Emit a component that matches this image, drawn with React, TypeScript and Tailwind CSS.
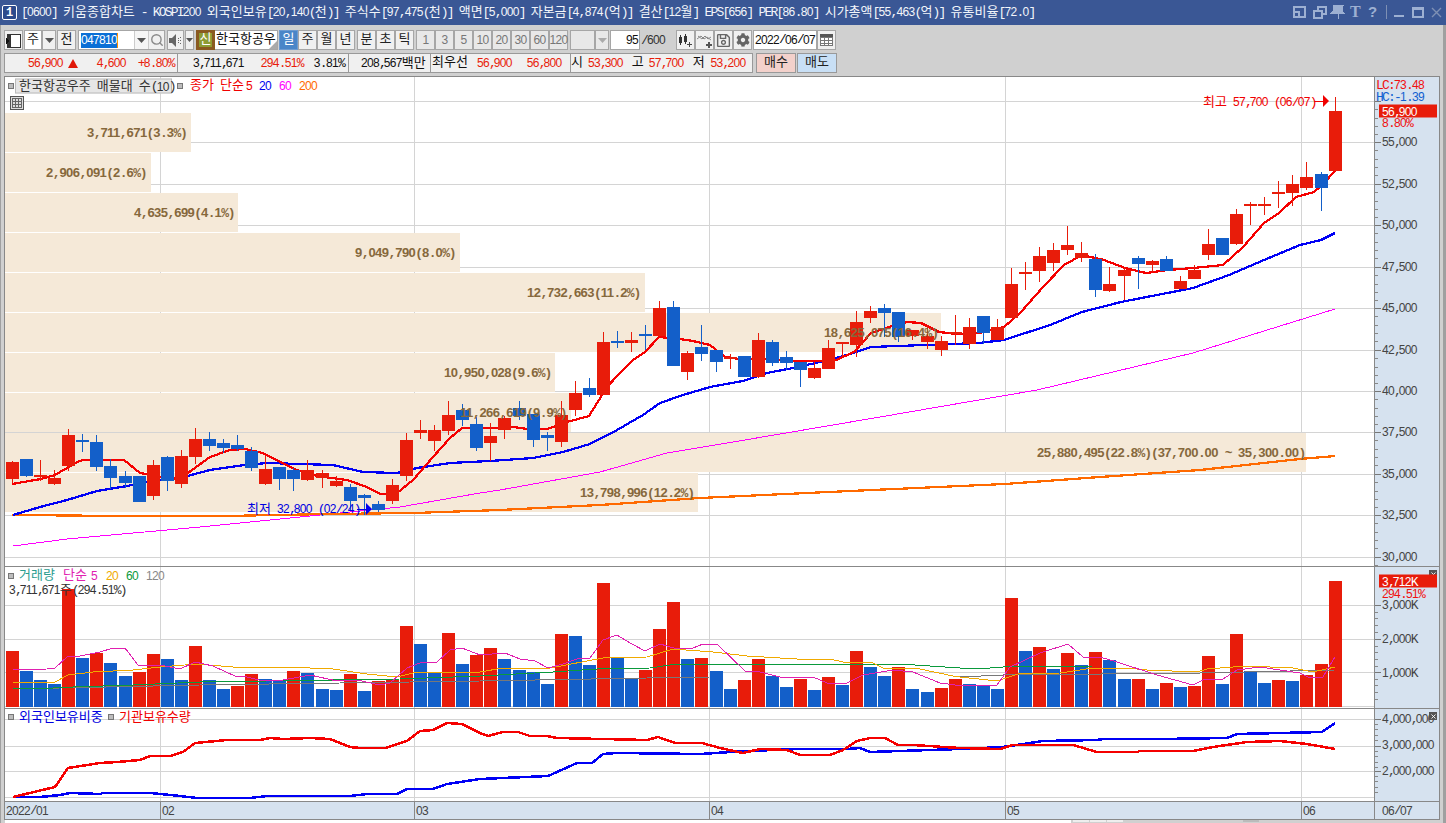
import { Search, X } from 'lucide-react'
import { FaCog, FaRegSave } from 'react-icons/fa'

// kind (1 red, 0 blue), body top, body bottom, wick top, wick bottom
const CANDLES: [number, number, number, number, number][] = [
  [1, 462, 479, 461, 483], [0, 459, 476, 459, 477], [1, 475, 476, 460, 481], [1, 478, 484, 470, 485], [1, 435, 466, 429, 471],
  [0, 440, 441, 434, 452], [0, 442, 467, 435, 471], [0, 466, 478, 459, 489], [0, 476, 483, 471, 488], [0, 476, 502, 476, 502],
  [1, 465, 496, 460, 500], [0, 457, 481, 456, 491], [1, 456, 484, 450, 488], [1, 439, 457, 428, 464], [0, 439, 446, 432, 451],
  [0, 443, 448, 439, 453], [0, 445, 449, 435, 451], [0, 451, 468, 447, 471], [1, 469, 484, 456, 485], [0, 467, 479, 467, 490],
  [0, 470, 479, 468, 491], [1, 470, 480, 460, 481], [1, 473, 478, 470, 488], [1, 481, 486, 476, 487], [0, 487, 501, 484, 510],
  [0, 495, 498, 494, 515], [0, 504, 510, 501, 512], [1, 485, 501, 479, 504], [1, 440, 476, 433, 481], [1, 430, 433, 420, 439],
  [1, 430, 441, 425, 451], [1, 415, 431, 401, 435], [0, 410, 420, 404, 426], [0, 424, 448, 417, 451], [1, 436, 443, 423, 461],
  [1, 418, 430, 416, 439], [0, 408, 416, 401, 420], [0, 414, 440, 414, 447], [0, 435, 438, 432, 451], [1, 415, 442, 401, 447],
  [1, 393, 410, 381, 416], [0, 388, 395, 378, 397], [1, 342, 395, 332, 395], [0, 341, 343, 331, 348], [1, 340, 343, 332, 352],
  [0, 334, 335, 325, 350], [1, 308, 336, 301, 336], [0, 307, 366, 301, 366], [1, 353, 372, 351, 380], [0, 347, 354, 325, 361],
  [0, 350, 362, 350, 372], [1, 357, 359, 354, 369], [0, 356, 377, 356, 377], [1, 340, 377, 333, 378], [0, 342, 363, 340, 366],
  [0, 357, 363, 351, 370], [0, 362, 370, 362, 387], [1, 368, 378, 362, 379], [1, 348, 369, 340, 369], [1, 342, 343, 342, 356],
  [1, 322, 345, 311, 357], [1, 311, 318, 306, 323], [0, 308, 313, 304, 337], [0, 312, 337, 312, 342], [1, 330, 336, 330, 340],
  [1, 336, 342, 325, 349], [1, 341, 350, 336, 356], [1, 332, 333, 315, 345], [1, 327, 344, 318, 349], [0, 316, 333, 316, 344],
  [1, 327, 340, 319, 340], [1, 284, 318, 268, 318], [1, 272, 274, 262, 290], [1, 256, 271, 247, 282], [1, 250, 263, 243, 271],
  [1, 245, 250, 226, 255], [1, 253, 258, 242, 262], [0, 259, 290, 254, 297], [1, 284, 291, 267, 292], [1, 270, 276, 267, 300],
  [0, 258, 264, 256, 289], [1, 261, 265, 260, 272], [0, 259, 271, 256, 271], [1, 281, 289, 276, 289], [1, 270, 279, 265, 279],
  [1, 244, 255, 229, 260], [0, 238, 255, 238, 255], [1, 214, 244, 209, 245], [1, 204, 206, 202, 225], [1, 204, 205, 197, 215],
  [1, 192, 193, 181, 208], [1, 184, 193, 175, 206], [1, 177, 188, 162, 190], [0, 174, 188, 172, 211], [1, 111, 171, 97, 171],
]

const VOLUMES: [number, number][] = [
  [1, 651], [0, 671], [0, 680], [0, 684], [1, 589], [0, 658], [1, 653], [0, 663], [0, 676], [1, 672],
  [1, 654], [0, 659], [0, 680], [1, 646], [0, 680], [0, 689], [1, 686], [1, 674], [0, 679], [0, 680],
  [1, 671], [0, 673], [0, 689], [0, 690], [1, 674], [0, 691], [1, 681], [1, 679], [1, 626], [0, 644],
  [0, 673], [1, 633], [0, 664], [1, 655], [1, 648], [0, 659], [0, 670], [0, 672], [0, 684], [1, 634],
  [0, 636], [0, 665], [1, 583], [0, 658], [0, 678], [1, 670], [1, 629], [1, 602], [0, 659], [1, 658],
  [0, 671], [0, 689], [1, 680], [1, 659], [0, 676], [0, 687], [1, 679], [0, 690], [1, 677], [0, 685],
  [1, 651], [0, 667], [0, 676], [1, 667], [0, 689], [0, 692], [1, 688], [1, 679], [0, 684], [0, 686],
  [0, 689], [1, 598], [0, 651], [1, 647], [0, 669], [1, 653], [0, 665], [1, 652], [0, 660], [0, 679],
  [1, 679], [0, 689], [1, 683], [0, 687], [1, 686], [1, 656], [0, 684], [1, 634], [0, 671], [0, 683],
  [1, 680], [0, 681], [1, 675], [1, 664], [1, 581],
]

// price panel moving averages, page coordinates
const MA5 = '12,484 41,479 55,475 67,468 77,462 83,460 110,460 124,460 140,473 157,476 173,479 188,473 210,457 230,450 245,449 263,453 280,462 297,470 317,476 347,480 367,487 380,494 397,493 413,480 433,457 450,438 462,428 490,428 513,427 528,429 547,429 567,422 589,416 607,387 618,375 633,360 645,352 659,337 680,339 693,341 710,345 725,357 740,359 767,359 793,361 813,361 836,360 854,352 871,333 889,327 907,322 921,323 939,332 957,334 979,333 1004,327 1021,312 1043,287 1064,265 1082,255 1104,260 1125,268 1146,273 1168,270 1193,268 1223,265 1243,247 1264,223 1279,213 1296,197 1314,192 1321,186 1335,171'
const MA20 = '13,515 40,507 67,500 97,491 127,486 147,482 180,478 210,470 245,465 267,463 333,465 363,472 397,473 417,468 450,463 490,461 533,458 563,452 590,444 617,430 643,415 660,403 683,395 710,387 743,381 767,373 793,368 820,362 847,355 871,347 925,345 979,343 1004,340 1050,325 1082,312 1121,302 1157,295 1193,288 1229,275 1264,260 1300,245 1321,240 1335,233'
const MA60 = '13,546 67,539 200,527 300,517 400,507 480,493 500,490 600,472 667,453 733,442 880,417 1037,390 1193,353 1335,309'
const MA200 = '12,515 124,516 224,516 330,514 414,513 500,510 600,505 700,498 850,491 1005,484 1100,477 1200,470 1300,459 1335,456'

// volume panel averages
const V5 = '13,670 47,669 55,668 68,656 80,656 100,652 113,648 125,648 138,665 160,665 180,669 195,662 213,666 237,677 243,676 263,681 283,680 310,675 337,681 357,680 380,685 390,683 407,668 420,663 437,662 450,650 462,648 480,655 505,653 520,659 535,661 548,668 563,664 577,659 590,658 603,640 617,635 630,643 645,651 660,644 677,649 693,648 703,644 717,644 745,671 760,672 780,677 813,677 827,683 847,683 863,675 893,670 913,672 940,683 963,686 997,685 1010,667 1040,653 1068,644 1083,657 1100,657 1117,662 1157,675 1193,685 1203,680 1223,679 1237,670 1260,667 1280,670 1300,673 1310,678 1323,677 1335,657'
const V20 = '13,682 55,682 68,675 93,672 133,670 160,667 197,664 233,667 287,667 333,669 367,674 397,677 417,672 480,672 503,668 550,668 603,658 647,657 673,649 713,652 747,656 797,659 830,659 843,662 873,663 883,668 920,669 953,676 960,677 997,681 1018,674 1060,673 1093,668 1127,668 1147,670 1197,672 1207,669 1247,666 1293,668 1313,672 1335,667'
const V60 = '13,688 33,689 73,687 133,685 200,682 267,681 400,679 480,676 553,672 597,669 650,668 670,665 780,664 900,664 960,668 990,668 1003,667 1093,666 1335,666'
const V120 = '13,689 200,685 480,681 647,678 710,677 960,677 1003,675 1200,673 1335,670'

// indicator panel
const INST = '13,797 55,787 68,768 100,763 117,762 140,760 150,756 170,756 183,752 195,743 227,740 260,740 270,738 283,739 310,738 330,739 350,747 360,748 385,748 407,741 420,731 433,730 447,723 462,724 480,733 488,736 503,732 518,732 530,736 547,736 557,738 647,740 658,737 675,743 702,743 720,748 743,753 760,749 787,750 800,755 830,755 843,750 857,741 870,738 885,738 898,745 913,745 960,748 1000,749 1013,745 1073,745 1097,752 1137,752 1140,751 1193,751 1213,747 1247,742 1280,741 1307,744 1335,749'
const FOREIGN = '13,797 40,797 60,795 70,793 100,794 103,793 150,793 180,796 197,798 250,798 267,796 350,796 367,794 397,794 407,789 433,789 447,784 480,779 548,776 577,763 592,763 603,754 617,753 700,754 747,751 800,749 847,749 860,748 870,752 900,751 960,749 1003,747 1043,741 1097,740 1103,739 1160,739 1227,738 1237,734 1322,732 1335,723'

const PROFILE = [
  { y: 113, w: 186, label: '3,711,671(3.3%)', tx: 87 },
  { y: 153, w: 146, label: '2,906,091(2.6%)', tx: 46 },
  { y: 193, w: 233, label: '4,635,699(4.1%)', tx: 134 },
  { y: 233, w: 455, label: '9,049,790(8.0%)', tx: 355 },
  { y: 273, w: 640, label: '12,732,663(11.2%)', tx: 527 },
  { y: 313, w: 936, label: '18,625,075(16.4%)', tx: 824 },
  { y: 353, w: 550, label: '10,950,028(9.6%)', tx: 444 },
  { y: 393, w: 566, label: '11,266,619(9.9%)', tx: 460 },
  { y: 433, w: 1301, label: '25,880,495(22.8%)(37,700.00 ~ 35,300.00)', tx: 1037 },
  { y: 473, w: 693, label: '13,798,996(12.2%)', tx: 580 },
]

const MONTH_LINES = [160, 414, 709, 1005, 1301]
const PRICE_LINES = [101, 142, 184, 225, 267, 308, 350, 391, 432, 474, 515, 557]
const VOLUME_LINES = [605, 639, 672, 706]
const INDICATOR_LINES = [719, 746, 771, 797]

const PRICE_LABELS = ['55,000', '52,500', '50,000', '47,500', '45,000', '42,500', '40,000', '37,500', '35,000', '32,500', '30,000']

const RED = '#e81c0a'
const BLUE = '#135fc9'

const barX = (i: number) => Math.round(6 + 14.07 * i)

type TxtProps = { s: string; digit?: string; latin?: string; comma?: string }

// the screenshot's font is half-width: digits and latin advance 6px, hangul 12px
function Txt({
  s,
  digit = "font-['Liberation_Sans',sans-serif] text-[12px] tracking-[-0.67px]",
  latin = 'tracking-[-1.8px]',
  comma = 'tracking-[-3px]',
}: TxtProps) {
  return (
    <>
      {s
        .split(/([\u3131-\uD7A3]+|,|\d+)/)
        .filter(Boolean)
        .map((run, i) => {
          if (/[\u3131-\uD7A3]/.test(run)) return <span key={i}>{run}</span>
          if (run === ',') return <span key={i} className={comma}>{run}</span>
          return (
            <span key={i} className={/\d/.test(run) ? digit : latin}>
              {run}
            </span>
          )
        })}
    </>
  )
}

// label on the chart canvas, x/y in page pixels
function At({ x, y, className, children }: { x: number; y: number; className?: string; children: React.ReactNode }) {
  return (
    <div className={`absolute -translate-y-1/2 leading-[14px] ${className ?? ''}`} style={{ left: x - 5, top: y - 76 }}>
      {children}
    </div>
  )
}

function Plot({ top, height, grid, children }: { top: number; height: number; grid: number[]; children?: React.ReactNode }) {
  return (
    <svg width={1369} height={height} viewBox={`5 ${top} 1369 ${height}`} shapeRendering="crispEdges" className="block shrink-0">
      {grid.map((y) => (
        <rect key={y} x={5} y={y} width={1369} height={1} fill="#d4d4d4" />
      ))}
      {MONTH_LINES.map((x) => (
        <rect key={x} x={x} y={top} width={1} height={height} fill="#d4d4d4" />
      ))}
      {children}
    </svg>
  )
}

function Ticks({ top, height, majors, step }: { top: number; height: number; majors: number[]; step: number }) {
  const minors: number[] = []
  majors.forEach((m) => {
    for (let k = 1; k < 5; k++) minors.push(Math.round(m + (k * step) / 5))
  })
  return (
    <svg width={64} height={height} viewBox={`1375 ${top} 64 ${height}`} shapeRendering="crispEdges" className="block">
      {majors.map((y) => (
        <rect key={y} x={1375} y={y} width={6} height={1} fill="#777" />
      ))}
      {minors.map((y) => (
        <rect key={y} x={1375} y={y} width={3} height={1} fill="#888" />
      ))}
    </svg>
  )
}

function Btn({ w, look = 'border-[#a6a6a6] bg-[#f0f0f0] text-[#222]', className, children }: { w: string; look?: string; className?: string; children?: React.ReactNode }) {
  return <div className={`flex h-5 shrink-0 items-center justify-center border ${look} ${w} ${className ?? ''}`}>{children}</div>
}

function Caret({ color = '#555' }: { color?: string }) {
  return (
    <svg width="9" height="5" viewBox="0 0 9 5">
      <path d="M0 0h9L4.500 5z" fill={color} />
    </svg>
  )
}

function Bullet() {
  return <div className="h-[6px] w-[6px] border border-[#777] bg-[#bdbdbd]" />
}

function CloseMark() {
  return (
    <div className="flex h-[8px] w-[8px] items-center justify-center bg-[#555]">
      <X size={7} color="#fff" strokeWidth={3} />
    </div>
  )
}

function TitleBar() {
  return (
    <div className="flex h-[25px] shrink-0 items-center bg-[#3a5795] pl-[2px] text-white">
      <div className="flex h-[15px] w-[15px] items-center justify-center rounded-[2px] border border-white bg-[#2c4a8c] text-[12px] font-bold leading-none">1</div>
      <div className="ml-[4px] w-[1271px] text-[#f2f5fa]">
        <Txt
          s="[0600] 키움종합차트 - KOSPI200 외국인보유[20,140(천)] 주식수[97,475(천)] 액면[5,000] 자본금[4,874(억)] 결산[12월] EPS[656] PER[86.80] 시가총액[55,463(억)] 유통비율[72.0]"
          comma="tracking-[-1.8px]"
        />
      </div>
      <svg width="154" height="25" viewBox="1292 0 154 25" className="shrink-0" fill="none" stroke="#9db0d2" strokeWidth="1.4" shapeRendering="crispEdges">
        <path d="M1294 7h11v10h-11zM1294 12h5v5" />
        <path d="M1314 11h8v7h-8zM1318 11V7h8v7h-4" />
        <path d="M1334 6h9l-1 1v4l2 2h-12l2-2V7zM1338.500 13v6" fill="#9db0d2" />
        <path d="M1386.500 5v14" stroke="#7e90b4" />
        <path d="M1394 16h10" strokeWidth="2" />
        <path d="M1413 8h10v9h-10z" />
        <path d="M1413 8.500h10" strokeWidth="2" />
        <path d="M1432 8l9 9M1441 8l-9 9" stroke="#7e90b4" shapeRendering="auto" />
      </svg>
      <div className="absolute left-[1350px] top-[3px] font-['Liberation_Serif',serif] text-[16px] font-bold leading-[18px] text-[#9db0d2]">T</div>
      <div className="absolute left-[1368px] top-[3px] font-['Liberation_Sans',sans-serif] text-[15px] font-bold leading-[18px] text-[#9db0d2]">?</div>
    </div>
  )
}

function ToolbarTop() {
  const periods = ['1', '3', '5', '10', '20', '30', '60', '120']
  const dim = 'border-[#a6a6a6] bg-[#e8e8e8] text-[#777]'
  return (
    <div className="flex h-5 items-center">
      <Btn w="w-[19px]">
        <svg width="15" height="15" viewBox="0 0 15 15" shapeRendering="crispEdges">
          <path d="M1 1h13v13H1z" fill="#fff" stroke="#333" />
          <path d="M1 1h4v13H1z" fill="#333" />
          <path d="M0 5l4 3-4 3z" fill="#111" />
        </svg>
      </Btn>
      <Btn w="w-[18px]" look="border-[#a6a6a6] bg-white text-[#222]" className="ml-[1px]">
        <Txt s="주" />
      </Btn>
      <Btn w="w-[14px]">
        <Caret />
      </Btn>
      <Btn w="w-[19px]" className="ml-[1px]">
        <Txt s="전" />
      </Btn>
      <div className="ml-[2px] flex h-5 w-[87px] shrink-0 items-center border border-[#a6a6a6] bg-white">
        <div className="ml-[2px] w-[53px]">
          <span className="inline-block w-[37px] border-r border-[#ff9000] bg-[#0a6fd6] leading-[15px] text-white">
            <Txt s="047810" />
          </span>
        </div>
        <div className="flex h-full w-[14px] items-center justify-center border-l border-[#ccc] bg-[#f5f5f5]">
          <Caret />
        </div>
        <div className="flex h-full flex-1 items-center justify-center border-l border-[#ccc] bg-[#f0f0f0]">
          <Search size={14} color="#8a8a8a" strokeWidth={2.4} />
        </div>
      </div>
      <Btn w="w-[17px]" className="ml-[2px]">
        <svg width="13" height="13" viewBox="0 0 13 13">
          <path d="M0 4h3l4-4v13l-4-4H0z" fill="#666" />
          <path d="M9 4h1v1H9zM11 3h1v1h-1zM9 8h1v1H9zM11 9h1v1h-1zM9 6h1v1H9zM11 6h1v1h-1z" fill="#666" />
        </svg>
      </Btn>
      <Btn w="w-[9px]" className="ml-[1px]">
        <svg width="7" height="4" viewBox="0 0 7 4">
          <path d="M0 0h7L3.500 4z" fill="#555" />
        </svg>
      </Btn>
      <div className="ml-[2px] flex h-5 w-[19px] shrink-0 items-center justify-center border-[3px] border-[#8a5a20] bg-[#8d9c34] text-white">
        <Txt s="신" />
      </div>
      <div className="relative flex h-5 w-[63px] shrink-0 items-center overflow-hidden border-y border-r border-[#a6a6a6] bg-white pl-[1px] text-[#111]">
        <Txt s="한국항공우" />
        <div className="absolute bottom-0 right-0 border-b-[8px] border-l-[8px] border-b-[#aaa] border-l-transparent" />
      </div>
      <Btn w="w-[19px]" look="border-[#6d9bd0] bg-[#4a86c8] text-white" className="ml-[1px]">
        <Txt s="일" />
      </Btn>
      {['주', '월', '년'].map((t) => (
        <Btn key={t} w="w-[19px]">
          <Txt s={t} />
        </Btn>
      ))}
      <div className="w-[2px] shrink-0" />
      {['분', '초', '틱'].map((t) => (
        <Btn key={t} w="w-[19px]">
          <Txt s={t} />
        </Btn>
      ))}
      <div className="w-[2px] shrink-0" />
      {periods.map((t) => (
        <Btn key={t} w="w-[19px]" look={dim}>
          <Txt s={t} />
        </Btn>
      ))}
      <Btn w="w-[25px]" look={dim} className="ml-[2px]" />
      <Btn w="w-[14px]" look={dim}>
        <Caret color="#aaa" />
      </Btn>
      <div className="ml-[1px] flex h-5 w-[30px] shrink-0 items-center justify-end border border-[#a6a6a6] bg-white pr-[1px] text-[#111]">
        <Txt s="95" />
      </div>
      <div className="ml-[1px] w-[35px] shrink-0 text-[#333]">
        <Txt s="/600" />
      </div>
      <Btn w="w-[19px]">
        <svg width="15" height="15" viewBox="0 0 15 15" shapeRendering="crispEdges">
          <path d="M2 2h1v2h1v6H3v2H2v-2H1V4h1zM7 1h1v2h1v6H8v2H7V9H6V3h1z" fill="#333" />
          <path d="M11 9h1v2h2v1h-2v2h-1v-2H9v-1h2z" fill="#444" />
        </svg>
      </Btn>
      <Btn w="w-[19px]">
        <svg width="16" height="15" viewBox="0 0 16 15">
          <path d="M0 6l4-3 3 3 3-2 4 3M1 3l4 3 3-3 3 3 3-2" stroke="#888" strokeWidth="1" fill="none" />
          <path d="M11 9h2v2h2v2h-2v2h-2v-2H9v-2h2z" fill="#555" />
        </svg>
      </Btn>
      <Btn w="w-[19px]">
        <FaRegSave size={15} color="#666" />
      </Btn>
      <Btn w="w-[19px]">
        <FaCog size={14} color="#666" />
      </Btn>
      <div className="ml-[1px] flex h-5 w-[64px] shrink-0 items-center justify-center border border-[#a6a6a6] bg-white text-[#111]">
        <Txt s="2022/06/07" />
      </div>
      <Btn w="w-[19px]">
        <svg width="13" height="12" viewBox="0 0 13 12" shapeRendering="crispEdges">
          <path d="M0 0h13v3H0z" fill="#555" />
          <path d="M.500 3.500h12v8H.500zM.500 6.500h12M.500 9h12M4.500 3.500v8M8.500 3.500v8" stroke="#777" fill="#fff" />
        </svg>
      </Btn>
    </div>
  )
}

function InfoBox({ w, children }: { w: string; children: React.ReactNode }) {
  return <div className={`-mr-[1px] flex h-5 shrink-0 items-center border border-[#999] bg-[#f0f0f0] ${w}`}>{children}</div>
}

function ToolbarBottom() {
  return (
    <div className="mt-[3px] flex h-5 items-center">
      <InfoBox w="w-[174px]">
        <span className="ml-[23px] text-[#e81c0a]">
          <Txt s="56,900" />
        </span>
        <span className="ml-[5px] border-x-[5px] border-b-[9px] border-x-transparent border-b-[#e01808]" />
        <span className="ml-[19px] text-[#e81c0a]">
          <Txt s="4,600" />
        </span>
        <span className="ml-[12px] text-[#e81c0a]">
          <Txt s="+8.80%" />
        </span>
      </InfoBox>
      <InfoBox w="w-[172px]">
        <span className="ml-[15px] text-[#111]">
          <Txt s="3,711,671" />
        </span>
        <span className="ml-[17px] text-[#e81c0a]">
          <Txt s="294.51%" />
        </span>
        <span className="ml-[11px] text-[#111]">
          <Txt s="3.81%" />
        </span>
      </InfoBox>
      <InfoBox w="w-[83px]">
        <span className="ml-[12px] text-[#111]">
          <Txt s="208,567백만" />
        </span>
      </InfoBox>
      <InfoBox w="w-[141px]">
        <span className="ml-[1px] text-[#111]">
          <Txt s="최우선" />
        </span>
        <span className="ml-[9px] text-[#e81c0a]">
          <Txt s="56,900" />
        </span>
        <span className="ml-[15px] text-[#e81c0a]">
          <Txt s="56,800" />
        </span>
      </InfoBox>
      <InfoBox w="w-[183px]">
        <span className="text-[#111]">
          <Txt s="시" />
        </span>
        <span className="ml-[5px] text-[#e81c0a]">
          <Txt s="53,300" />
        </span>
        <span className="ml-[9px] text-[#111]">
          <Txt s="고" />
        </span>
        <span className="ml-[5px] text-[#e81c0a]">
          <Txt s="57,700" />
        </span>
        <span className="ml-[9px] text-[#111]">
          <Txt s="저" />
        </span>
        <span className="ml-[6px] text-[#e81c0a]">
          <Txt s="53,200" />
        </span>
      </InfoBox>
      <div className="ml-[4px] flex h-5 w-[40px] shrink-0 items-center justify-center border border-[#999] bg-[#f3d1cb] text-[#222]">
        <Txt s="매수" />
      </div>
      <div className="ml-[1px] flex h-5 w-[40px] shrink-0 items-center justify-center border border-[#999] bg-[#c8dff5] text-[#222]">
        <Txt s="매도" />
      </div>
    </div>
  )
}

function PricePlot() {
  return (
    <Plot top={77} height={489} grid={PRICE_LINES}>
      {PROFILE.map((p) => (
        <rect key={p.y} x={5} y={p.y} width={p.w} height={39} fill="#f5e9d8" />
      ))}
      <polyline points={MA60} fill="none" stroke="#ff00ff" strokeWidth={1} />
      <polyline points={MA200} fill="none" stroke="#ff6a00" strokeWidth={2.25} />
      <polyline points={MA20} fill="none" stroke="#0000f5" strokeWidth={2.25} />
      <polyline points={MA5} fill="none" stroke="#f50000" strokeWidth={2.25} />
      {CANDLES.map(([kind, top, bottom, high, low], i) => {
        const x = barX(i)
        const color = kind ? RED : BLUE
        return (
          <g key={i} fill={color}>
            <rect x={x + 6} y={high} width={1} height={low - high} />
            <rect x={x} y={top} width={13} height={Math.max(bottom - top, 2)} />
          </g>
        )
      })}
      <rect x={1314} y={101} width={10} height={1} fill="#f00000" />
      <path d="M1323 95l6 6-6 6z" fill="#f00000" shapeRendering="auto" />
      <rect x={357} y={509} width={10} height={1} fill="#0000f0" />
      <path d="M366 503l6 6-6 6z" fill="#0000f0" shapeRendering="auto" />
    </Plot>
  )
}

function VolumePlot() {
  return (
    <Plot top={567} height={141} grid={VOLUME_LINES}>
      {VOLUMES.map(([kind, top], i) => (
        <rect key={i} x={barX(i)} y={top} width={13} height={707 - top} fill={kind ? RED : BLUE} />
      ))}
      <polyline points={V120} fill="none" stroke="#787878" strokeWidth={1} />
      <polyline points={V60} fill="none" stroke="#0a9a3c" strokeWidth={1} />
      <polyline points={V20} fill="none" stroke="#f0aa00" strokeWidth={1} />
      <polyline points={V5} fill="none" stroke="#e020b0" strokeWidth={1} />
    </Plot>
  )
}

function IndicatorPlot() {
  return (
    <Plot top={709} height={92} grid={INDICATOR_LINES}>
      <polyline points={FOREIGN} fill="none" stroke="#0000f5" strokeWidth={2.5} />
      <polyline points={INST} fill="none" stroke="#f50000" strokeWidth={2.5} />
    </Plot>
  )
}

function Overlay() {
  const wideDigit = "font-['Liberation_Sans',sans-serif] text-[13px] tracking-[-0.53px]"
  const wide = 'tracking-[-1.1px]'
  return (
    <div className="pointer-events-none absolute inset-0">
      {/* price legend */}
      <At x={8} y={85}>
        <Bullet />
      </At>
      <At x={15} y={85} className="flex h-[15px] w-[157px] items-center border border-[#bbb] bg-[#e6e6e6] pl-[3px] text-[#333]">
        <Txt s="한국항공우주 매물대 수(10)" />
      </At>
      <At x={177} y={85}>
        <Bullet />
      </At>
      <At x={190} y={85} className="text-[#f00000]">
        <Txt s="종가 단순" />
      </At>
      <At x={246} y={85} className="text-[#f00000]">
        <Txt s="5" />
      </At>
      <At x={259} y={85} className="text-[#0000f0]">
        <Txt s="20" />
      </At>
      <At x={279} y={85} className="text-[#ff00ff]">
        <Txt s="60" />
      </At>
      <At x={299} y={85} className="text-[#ff6a00]">
        <Txt s="200" />
      </At>
      <At x={10} y={102} className="h-[14px] w-[14px] border border-[#555] bg-[#ddd]">
        <svg width="12" height="12" viewBox="0 0 12 12" shapeRendering="crispEdges">
          <path d="M1 1.500h10M1 4.500h10M1 7.500h10M1 10.500h10M1.500 1v10M4.500 1v10M7.500 1v10M10.500 1v10" stroke="#666" fill="none" />
        </svg>
      </At>

      {/* volume profile labels */}
      {PROFILE.map((p) => (
        <At key={p.y} x={p.tx} y={p.y + 19} className="font-bold text-[#86683c]">
          <Txt s={p.label} digit={wideDigit} latin={wide} comma={wide} />
        </At>
      ))}

      <At x={1203} y={101} className="text-[#f00000]">
        <Txt s="최고 57,700 (06/07)" />
      </At>
      <At x={247} y={508} className="text-[#0000e0]">
        <Txt s="최저 32,800 (02/24)" />
      </At>

      {/* price axis */}
      <At x={1376} y={84} className="text-[#f01010]">
        <Txt s="LC:73.48" />
      </At>
      <At x={1376} y={96} className="text-[#1060d0]">
        <Txt s="HC:-1.39" />
      </At>
      <At x={1379} y={109.500} className="h-[13px] w-[58px] bg-[#e81c0a] pl-[3px] leading-[13px] text-white">
        <Txt s="56,900" />
      </At>
      <At x={1382} y={122} className="text-[#f01010]">
        <Txt s="8.80%" />
      </At>
      {PRICE_LABELS.map((label, i) => (
        <At key={label} x={1382} y={PRICE_LINES[i + 1] - 1} className="text-[#444]">
          <Txt s={label} />
        </At>
      ))}

      {/* volume legend and axis */}
      <At x={8} y={575}>
        <Bullet />
      </At>
      <At x={19} y={575} className="text-[#2a9d8f]">
        <Txt s="거래량" />
      </At>
      <At x={63} y={575} className="text-[#e020b0]">
        <Txt s="단순" />
      </At>
      <At x={91} y={575} className="text-[#e020b0]">
        <Txt s="5" />
      </At>
      <At x={106} y={575} className="text-[#f0aa00]">
        <Txt s="20" />
      </At>
      <At x={126} y={575} className="text-[#0a9a3c]">
        <Txt s="60" />
      </At>
      <At x={146} y={575} className="text-[#888]">
        <Txt s="120" />
      </At>
      <At x={9} y={589} className="text-[#333]">
        <Txt s="3,711,671주(294.51%)" />
      </At>
      <At x={1429} y={573}>
        <CloseMark />
      </At>
      <At x={1379} y={579.500} className="h-[13px] w-[58px] bg-[#e81c0a] pl-[3px] leading-[13px] text-white">
        <Txt s="3,712K" />
      </At>
      <At x={1382} y={593} className="text-[#f01010]">
        <Txt s="294.51%" />
      </At>
      <At x={1382} y={604} className="text-[#444]">
        <Txt s="3,000K" />
      </At>
      <At x={1382} y={638} className="text-[#444]">
        <Txt s="2,000K" />
      </At>
      <At x={1382} y={672} className="text-[#444]">
        <Txt s="1,000K" />
      </At>

      {/* indicator legend and axis */}
      <At x={8} y={716}>
        <Bullet />
      </At>
      <At x={19} y={717} className="text-[#0000e0]">
        <Txt s="외국인보유비중" />
      </At>
      <At x={108} y={716}>
        <Bullet />
      </At>
      <At x={119} y={717} className="text-[#f00000]">
        <Txt s="기관보유수량" />
      </At>
      <At x={1382} y={718} className="text-[#444]">
        <Txt s="4,000,000" />
      </At>
      <At x={1429} y={715}>
        <CloseMark />
      </At>
      <At x={1382} y={744} className="text-[#444]">
        <Txt s="3,000,000" />
      </At>
      <At x={1382} y={770} className="text-[#444]">
        <Txt s="2,000,000" />
      </At>
    </div>
  )
}

function DateAxis() {
  const months = [
    { w: 'w-[155px]', t: '2022/01' },
    { w: 'w-[254px]', t: '02' },
    { w: 'w-[295px]', t: '03' },
    { w: 'w-[296px]', t: '04' },
    { w: 'w-[296px]', t: '05' },
    { w: 'w-[73px]', t: '06' },
  ]
  return (
    <div className="flex h-[18px] border-b border-[#888] bg-[#d6e2ef] text-[#444]">
      {months.map((m, i) => (
        <div key={m.t} className={`flex h-full shrink-0 items-center pl-[1px] ${i ? 'border-l border-[#888]' : ''} ${m.w}`}>
          <Txt s={m.t} />
        </div>
      ))}
      <div className="flex flex-1 items-center border-l border-[#888] pl-[7px]">
        <Txt s="06/07" />
      </div>
    </div>
  )
}

export default function App() {
  const axis = 'w-[65px] shrink-0 border-l border-[#888] bg-[#d6e2ef]'
  return (
    <div className="relative flex h-[823px] w-[1446px] flex-col overflow-hidden whitespace-pre bg-[#d0d0d0] font-['Liberation_Mono','Noto_Sans_CJK_KR',monospace] text-[13px] leading-[14px]">
      <TitleBar />
      <div className="flex min-h-0 flex-1">
        <div className="w-[1px] shrink-0 bg-[#a0a0a0]" />
        <div className="flex w-[1442px] shrink-0 flex-col">
          <div className="h-[51px] shrink-0 pl-[3px] pt-[5px]">
            <ToolbarTop />
            <ToolbarBottom />
          </div>
          <div className="relative ml-[3px] w-[1436px] shrink-0 border-x border-t border-[#888]">
            <div className="flex h-[490px] border-b border-[#888] bg-white">
              <PricePlot />
              <div className={axis}>
                <Ticks top={77} height={489} majors={PRICE_LINES} step={41.45} />
              </div>
            </div>
            <div className="flex h-[142px] border-b border-[#888] bg-white">
              <VolumePlot />
              <div className={axis}>
                <Ticks top={567} height={141} majors={[605, 639, 672]} step={33.5} />
              </div>
            </div>
            <div className="flex h-[93px] border-b border-[#888] bg-white">
              <IndicatorPlot />
              <div className={axis}>
                <Ticks top={709} height={92} majors={[719, 746, 771]} step={26} />
              </div>
            </div>
            <DateAxis />
            <Overlay />
          </div>
          <div className="flex h-[3px] pl-[4px]">
            <div className="w-[1066px] bg-white" />
            <div className="ml-[2px] h-[2px] w-[16px] bg-[#eee]" />
            <div className="ml-[1px] h-[2px] w-[16px] bg-[#eee]" />
            <div className="ml-[1px] h-[2px] w-[16px] bg-[#eee]" />
            <div className="ml-[120px] h-[2px] w-[16px] bg-[#bbb]" />
          </div>
        </div>
        <div className="w-[3px] shrink-0 bg-[#a0a0a0]" />
      </div>
    </div>
  )
}
